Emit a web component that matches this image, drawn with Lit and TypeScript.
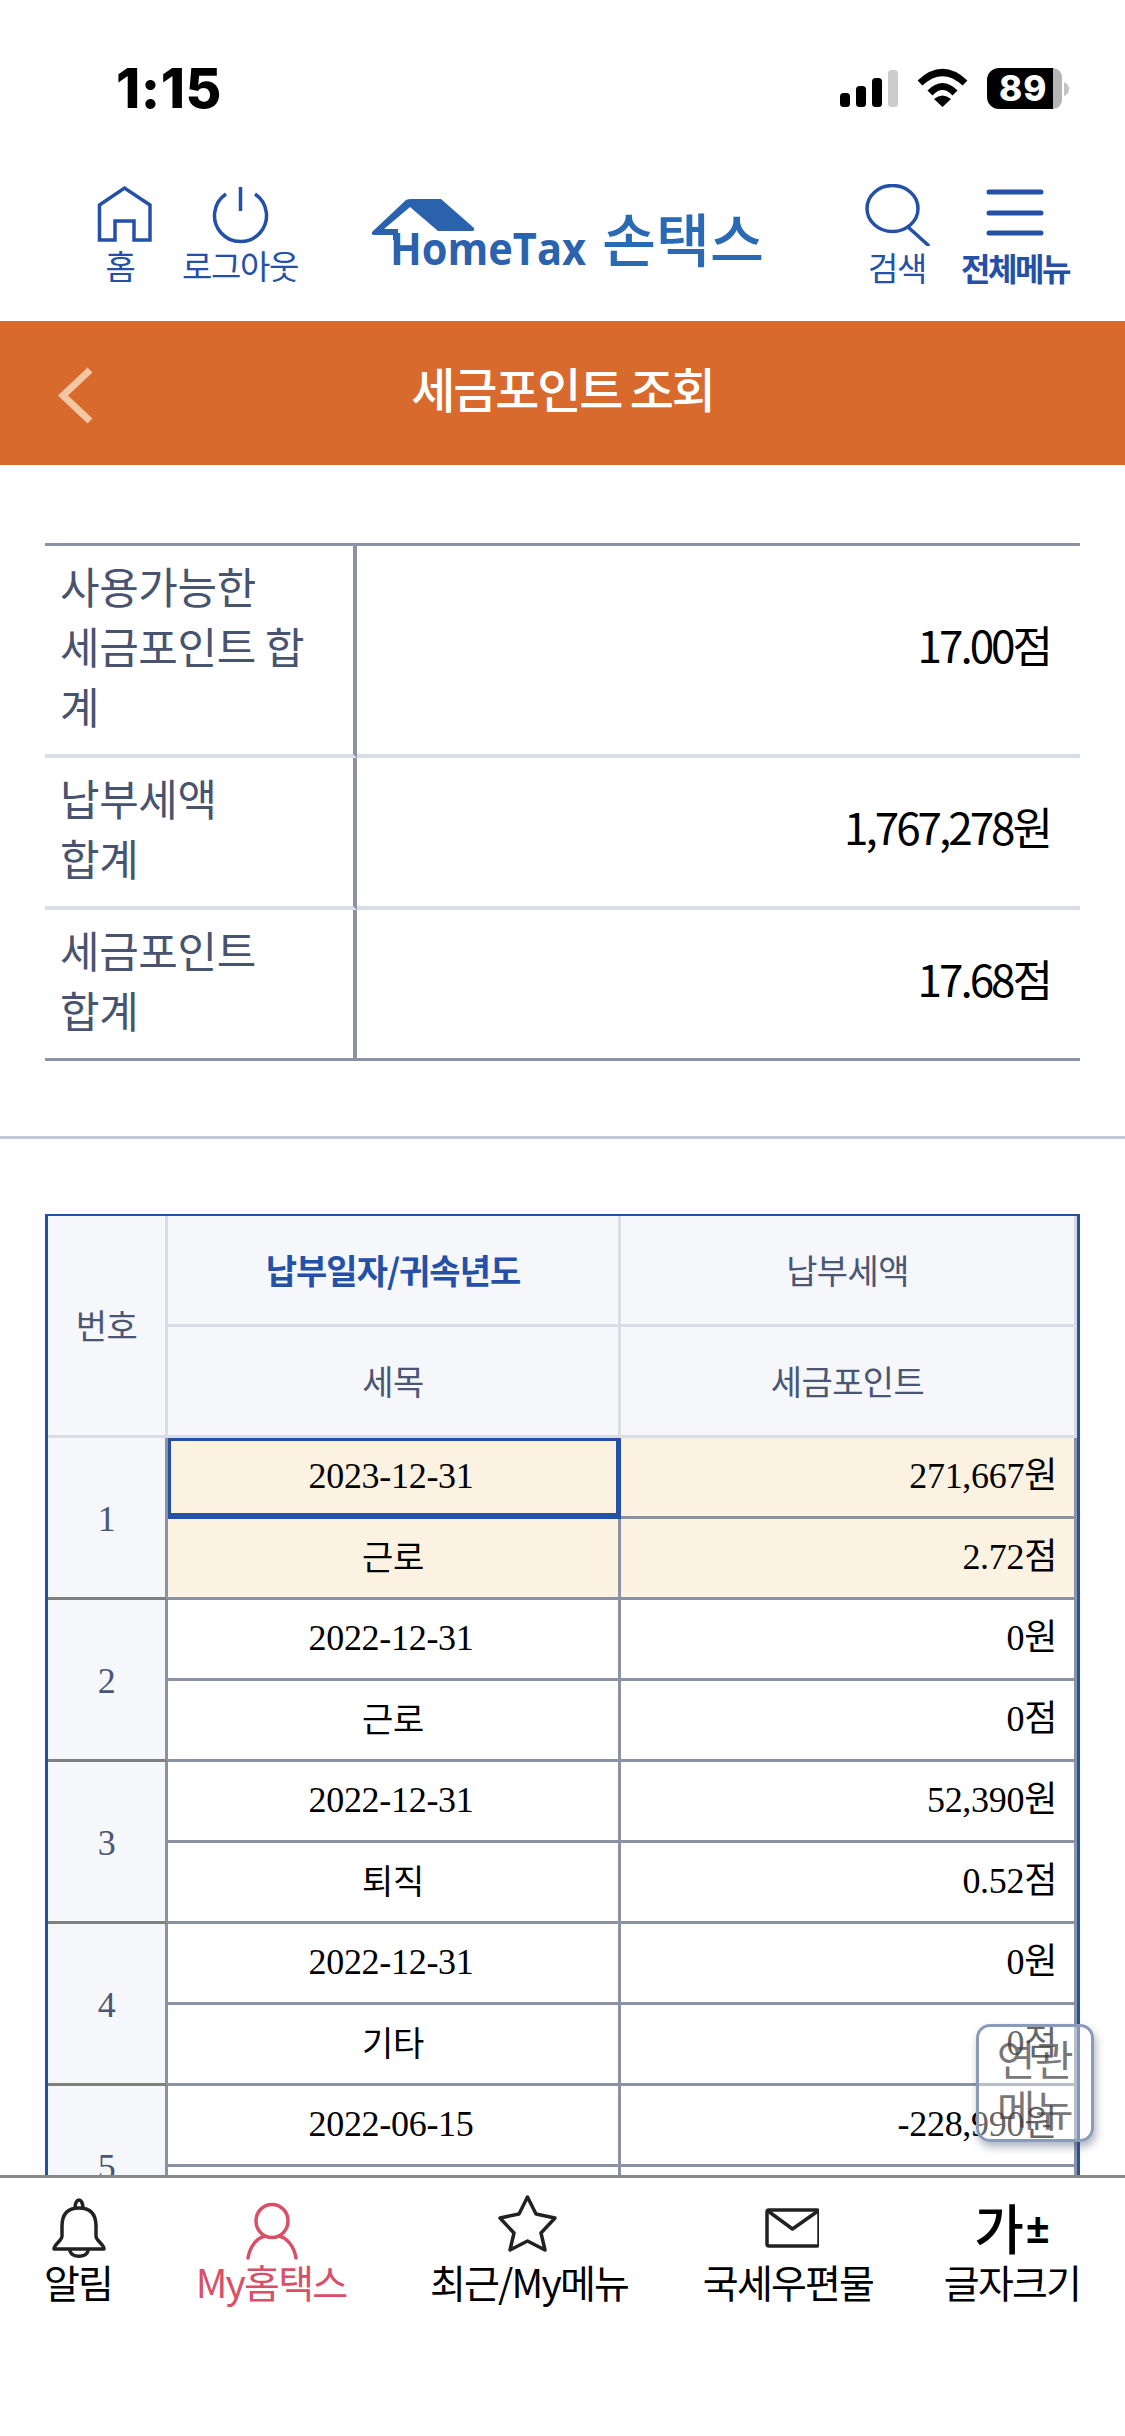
import { LitElement, html, css, svg } from 'lit';
import { customElement } from 'lit/decorators.js';
import { classMap } from 'lit/directives/class-map.js';

const rows = [
  { no: 1, date: '2023-12-31', amount: '271,667원', kind: '근로', point: '2.72점', active: true },
  { no: 2, date: '2022-12-31', amount: '0원', kind: '근로', point: '0점' },
  { no: 3, date: '2022-12-31', amount: '52,390원', kind: '퇴직', point: '0.52점' },
  { no: 4, date: '2022-12-31', amount: '0원', kind: '기타', point: '0점' },
  { no: 5, date: '2022-06-15', amount: '-228,990원', kind: '', point: '' },
];

const navItems = [
  {
    label: '알림', width: 156, box: '47 2195 62 66', w: 62,
    icon: svg`<path d="M62 2226C62 2214 68 2208 79 2208C90 2208 96 2214 96 2226V2236C96 2241 104 2244 104 2249H54C54 2244 62 2241 62 2236Z"/><path d="M75 2208C75 2203 77 2200 79 2200C81 2200 83 2203 83 2208"/><path d="M70 2251C72 2258 86 2258 88 2251"/>`,
  },
  {
    label: 'My홈택스', width: 230, active: true, box: '240 2195 62 66', w: 62,
    icon: svg`<ellipse cx="272" cy="2221" rx="16" ry="16.5"/><path d="M248 2258C250 2246 257 2238 265 2236M296 2258C294 2246 287 2238 279 2236"/>`,
  },
  {
    label: '최근/My메뉴', width: 286, box: '497 2195 64 66', w: 64,
    icon: svg`<path d="M527.5 2197L536 2214L555 2218L541 2233L545 2250L527.5 2241L510 2250L514 2233L500 2218L519 2214Z"/>`,
  },
  {
    label: '국세우편물', width: 232, box: '757 2195 62 66', w: 62,
    icon: svg`<rect x="767" y="2210" width="52" height="36" rx="2"/><path d="M768 2211L792.5 2229L818 2211"/>`,
  },
];

@customElement('app-root')
export class AppRoot extends LitElement {
  static styles = css`
    :host {
      display: flex;
      flex-direction: column;
      position: relative;
      width: 1125px;
      height: 2436px;
      overflow: hidden;
      background: #fff;
      font-family: "Noto Sans CJK KR", "Noto Sans", sans-serif;
    }

    /* status bar */
    .status {
      flex: none;
      height: 150px;
      box-sizing: border-box;
      padding: 58px 54px 0 116px;
      display: flex;
      justify-content: space-between;
      align-items: flex-start;
    }
    .time {
      font: 800 55px/60px Inter, "Liberation Sans", sans-serif;
      color: #000;
      letter-spacing: 0.5px;
    }
    .status-icons {
      display: block;
      margin-top: 8px;
    }
    .battery-text {
      font: 800 35px Inter, "Liberation Sans", sans-serif;
      letter-spacing: 1px;
      fill: #fff;
    }

    /* header */
    .top {
      flex: none;
      height: 171px;
      box-sizing: border-box;
      padding: 34px 0 0 83px;
      display: flex;
      align-items: flex-start;
      color: #2450a8;
    }
    .tool {
      display: flex;
      flex-direction: column;
      align-items: center;
      font-size: 33px;
      line-height: 38px;
      letter-spacing: -1.4px;
      white-space: nowrap;
    }
    .tool svg {
      display: block;
      fill: none;
      stroke: #2450a8;
      stroke-width: 3.5;
      margin-bottom: 2px;
    }
    .tool.strong {
      font-weight: 700;
      font-size: 32px;
      letter-spacing: -2.5px;
    }
    .home { width: 84px; }
    .home span { margin-right: 10px; }
    .logout { width: 120px; margin-left: 13px; }
    .search { width: 80px; margin-left: 89px; }
    .menu { width: 120px; margin-left: 18px; }
    .logo {
      display: block;
      margin: 11px 0 0 68px;
    }
    .logo-en {
      font: 700 44px "Open Sans", sans-serif;
      fill: #2a62ad;
    }
    .logo-ko {
      font: 500 58px "Noto Sans CJK KR", sans-serif;
      fill: #2a6ab5;
    }

    /* title */
    .title-bar {
      flex: none;
      height: 144px;
      background: #d76a2c;
      display: grid;
      grid-template-columns: 1fr auto 1fr;
      align-items: center;
      color: #fff;
    }
    .title-bar svg {
      display: block;
      margin: 6px 0 0 53px;
      fill: none;
      stroke: #f3c6a4;
      stroke-width: 7;
    }
    .title-bar h1 {
      margin: -12px 0 0;
      font-size: 48px;
      line-height: 60px;
      font-weight: 500;
      letter-spacing: -2.2px;
    }

    /* scrolling content */
    .content {
      flex: 1;
      min-height: 0;
      overflow: hidden;
    }
    table {
      border-spacing: 0;
      border-collapse: separate;
      table-layout: fixed;
    }
    th, td {
      padding: 0;
      font-weight: 400;
    }
    .summary {
      width: 1035px;
      margin: 78px 45px 0;
      border-top: 3px solid #8a92a3;
      border-bottom: 3px solid #8a92a3;
    }
    .summary th, .summary td {
      box-sizing: border-box;
    }
    .summary th {
      width: 312px;
      padding: 0 0 10px 15px;
      text-align: left;
      font-size: 43px;
      line-height: 60px;
      letter-spacing: -0.4px;
      color: #47536f;
      white-space: nowrap;
      border-right: 4px solid #8a92a3;
    }
    .summary td {
      padding: 0 30px 12px 0;
      text-align: right;
      font-size: 44px;
      letter-spacing: -3px;
      color: #000;
    }
    .summary tr:not(:last-child) th,
    .summary tr:not(:last-child) td {
      border-bottom: 4px solid #d9dde8;
    }
    .summary .r1 > * { height: 212px; }
    .summary .r2 > * { height: 152px; }
    .summary .r3 > * { height: 148px; }

    .rule {
      height: 3px;
      margin: 75px 0;
      background: #bfcbdd;
    }

    .list {
      width: 1035px;
      margin: 0 45px;
      border: solid #2450a8;
      border-width: 2px 3px 0;
      font-size: 34px;
      letter-spacing: -0.6px;
    }
    .list th {
      box-sizing: border-box;
      height: 111px;
      padding-bottom: 2px;
      background: #f5f7fb;
      color: #4a5673;
      font-size: 34px;
      text-align: center;
      border-right: 3px solid #d9dde8;
      border-bottom: 3px solid #d9dde8;
    }
    .list th:last-child { border-right-color: #d5d9e2; }
    .list th.on {
      color: #2450a8;
      font-weight: 700;
      letter-spacing: -1px;
    }
    .list td {
      box-sizing: border-box;
      height: 81px;
      padding-bottom: 3px;
      text-align: center;
      color: #000;
      background: #fff;
      font-family: "Liberation Serif", "Noto Sans CJK KR", serif;
      font-size: 36px;
      line-height: 40px;
      letter-spacing: -0.3px;
      border-right: 3px solid #8a92a3;
      border-bottom: 3px solid #8a92a3;
    }
    .list td.no {
      padding: 3px 0 0;
      background: #f5f7fb;
      color: #4a5673;
      border-bottom-color: #808080;
    }
    .list td.date { padding-right: 4px; }
    .list td.amt {
      text-align: right;
      padding-right: 17px;
    }
    .list td.kind {
      padding-bottom: 5px;
      font-family: "Noto Sans CJK KR", sans-serif;
      font-size: 34px;
    }
    .list tr.hl td:not(.no) { background: #fcf2e2; }
    .list td.sel {
      box-shadow: inset 3px 3px 0 #2450a8, inset -2px 0 0 #2450a8, inset 0 -3px 0 #2450a8;
      border-bottom-color: #2450a8;
      border-right-color: #2450a8;
    }

    /* floating quick button */
    .quick {
      position: absolute;
      top: 2024px;
      right: 31px;
      width: 118px;
      height: 118px;
      box-sizing: border-box;
      border: 3px solid #8b9cba;
      border-radius: 14px;
      background: rgba(255, 255, 255, 0.4);
      box-shadow: 2px 5px 8px rgba(60, 70, 100, 0.4);
      color: rgba(60, 60, 60, 0.7);
      font-size: 42px;
      line-height: 50px;
      text-align: center;
      letter-spacing: -0.5px;
      display: flex;
      align-items: center;
      justify-content: center;
    }

    /* bottom nav */
    .nav {
      flex: none;
      height: 261px;
      box-sizing: border-box;
      background: #fff;
      border-top: 3px solid #888;
      padding-top: 17px;
      display: flex;
      align-items: flex-start;
      color: #000;
    }
    .nav-item {
      flex: none;
      display: flex;
      flex-direction: column;
      align-items: center;
      font-size: 39px;
      line-height: 46px;
      letter-spacing: -1.8px;
      white-space: nowrap;
    }
    .nav-item svg {
      display: block;
      margin-bottom: -3px;
      fill: none;
      stroke: #222;
      stroke-width: 3.5;
      stroke-linejoin: round;
      stroke-linecap: round;
    }
    .nav-item.active { color: #d94f68; }
    .nav-item.active svg { stroke: #d94f68; }
    .font-size {
      height: 63px;
      display: flex;
      align-items: center;
      font-size: 54px;
      font-weight: 500;
      line-height: 63px;
      letter-spacing: 0;
    }
    .font-size span {
      font: 700 42px "Noto Sans", sans-serif;
      margin-left: 2px;
    }
  `;

  renderStatus() {
    return html`
      <div class="status">
        <div class="time">1:15</div>
        <svg class="status-icons" width="233" height="50" viewBox="838 66 233 50">
          <rect x="840" y="93" width="10" height="14" rx="3.5" fill="#000"/>
          <rect x="856" y="86" width="10" height="21" rx="3.5" fill="#000"/>
          <rect x="872" y="78" width="10" height="29" rx="3.5" fill="#000"/>
          <rect x="888" y="70" width="10" height="37" rx="3.5" fill="#ccc"/>
          <path d="M920 83Q942.500 62 965 83M930 93Q942.500 80 955 93" fill="none" stroke="#000" stroke-width="7"/>
          <path d="M942.500 107L934 99Q942.500 92 951 99Z" fill="#000"/>
          <path d="M1053 68H999A12 12 0 0 0 987 80V97A12 12 0 0 0 999 109H1053Z" fill="#000"/>
          <path d="M1053 68A9 9 0 0 1 1062 77V100A9 9 0 0 1 1053 109Z" fill="#b5b5b5"/>
          <path d="M1064 82Q1069 84 1069 89Q1069 94 1064 96Z" fill="#c4c4c4"/>
          <text class="battery-text" x="999" y="101">89</text>
        </svg>
      </div>
    `;
  }

  renderTop() {
    return html`
      <div class="top">
        <div class="tool home">
          <svg width="60" height="60" viewBox="95 183 60 60">
            <path d="M99.500 239V204L124.500 187L150 204V239H134V220H115V239Z"/>
          </svg>
          <span>홈</span>
        </div>
        <div class="tool logout">
          <svg width="60" height="60" viewBox="210 183 60 60">
            <path d="M226 193A26 26 0 1 0 255 193M240.500 186V210"/>
          </svg>
          <span>로그아웃</span>
        </div>
        <svg class="logo" width="400" height="80" viewBox="368 195 400 80">
          <path d="M372 232L406 200Q408 199 411 199H441L474 228Q475 231 472 231H438L410 207L384 229H398V240H393V235H374Q371 235 372 232Z" fill="#2a62ad"/>
          <text class="logo-en" x="390" y="265" textLength="196" lengthAdjust="spacingAndGlyphs">HomeTax</text>
          <text class="logo-ko" x="602" y="262" textLength="162" lengthAdjust="spacingAndGlyphs">손택스</text>
        </svg>
        <div class="tool search">
          <svg width="70" height="62" viewBox="860 184 70 62">
            <ellipse cx="890.500" cy="208.500" rx="25.500" ry="23"/>
            <path d="M906 227L926 245" stroke-linecap="round"/>
          </svg>
          <span>검색</span>
        </div>
        <div class="tool menu strong">
          <svg width="70" height="62" viewBox="981 184 70 62" style="stroke-width:5" stroke-linecap="round">
            <path d="M990 192H1042M990 213H1042M990 233H1042"/>
          </svg>
          <span>전체메뉴</span>
        </div>
      </div>
    `;
  }

  renderRows() {
    return rows.map(
      (r) => html`
        <tr class=${classMap({ hl: !!r.active })}>
          <td class="no" rowspan="2">${r.no}</td>
          <td class=${classMap({ date: true, sel: !!r.active })}>${r.date}</td>
          <td class="amt">${r.amount}</td>
        </tr>
        <tr class=${classMap({ hl: !!r.active })}>
          <td class="kind">${r.kind}</td>
          <td class="amt">${r.point}</td>
        </tr>
      `
    );
  }

  render() {
    return html`
      ${this.renderStatus()} ${this.renderTop()}
      <div class="title-bar">
        <svg width="45" height="62" viewBox="52 366 45 62">
          <path d="M89 371L62 396.500L89 422"/>
        </svg>
        <h1>세금포인트 조회</h1>
        <span></span>
      </div>
      <div class="content">
        <table class="summary">
          <tr class="r1"><th>사용가능한<br />세금포인트 합<br />계</th><td>17.00점</td></tr>
          <tr class="r2"><th>납부세액<br />합계</th><td>1,767,278원</td></tr>
          <tr class="r3"><th>세금포인트<br />합계</th><td>17.68점</td></tr>
        </table>
        <div class="rule"></div>
        <table class="list">
          <colgroup>
            <col style="width:120px" />
            <col style="width:453px" />
            <col style="width:456px" />
          </colgroup>
          <tr>
            <th rowspan="2">번호</th>
            <th class="on">납부일자/귀속년도</th>
            <th>납부세액</th>
          </tr>
          <tr>
            <th>세목</th>
            <th>세금포인트</th>
          </tr>
          ${this.renderRows()}
        </table>
      </div>
      <div class="quick">연관<br />메뉴</div>
      <nav class="nav">
        ${navItems.map(
          (n) => html`
            <div class="nav-item ${n.active ? 'active' : ''}" style="width:${n.width}px">
              <svg width=${n.w} height="66" viewBox=${n.box}>${n.icon}</svg>
              <span>${n.label}</span>
            </div>
          `
        )}
        <div class="nav-item" style="width:216px">
          <div class="font-size">가<span>±</span></div>
          <span>글자크기</span>
        </div>
      </nav>
    `;
  }
}
